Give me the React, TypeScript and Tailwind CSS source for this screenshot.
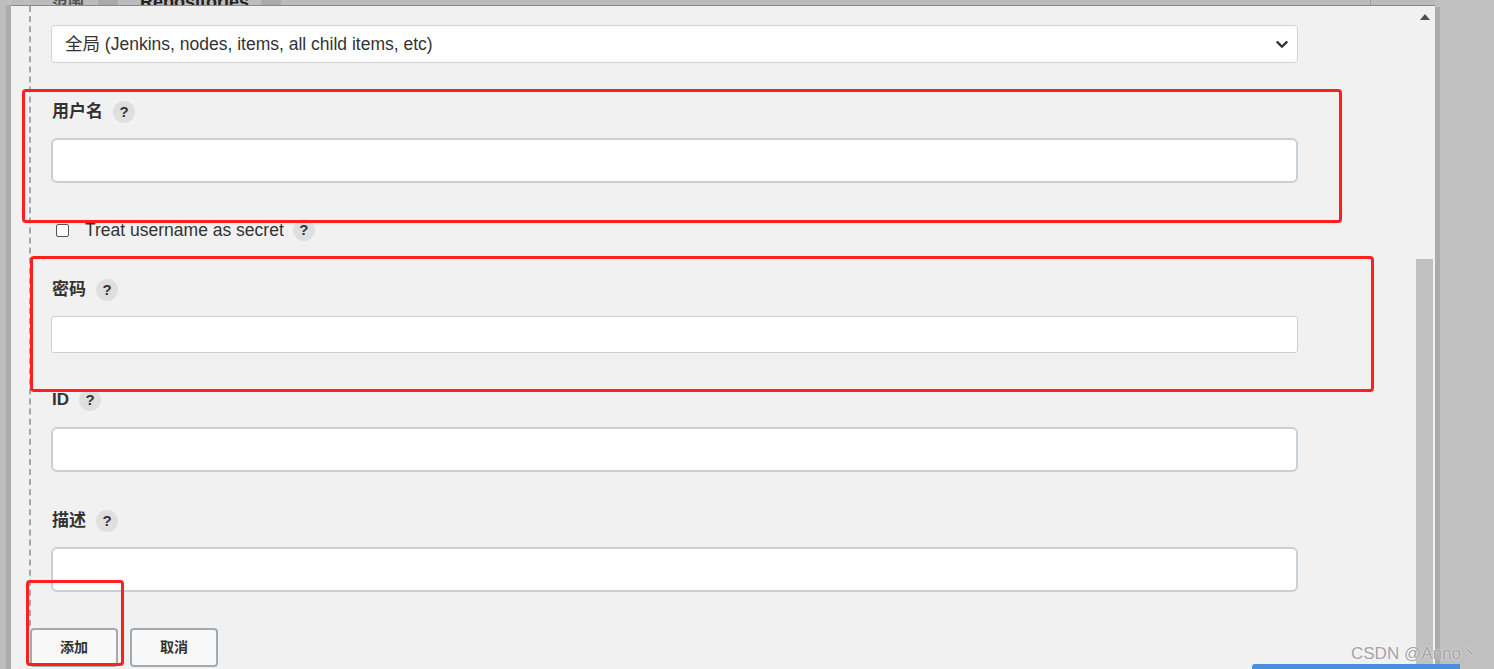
import React from "react";

const CN = "font-['Liberation_Sans','Noto_Sans_CJK_SC',sans-serif]";

function Help({ className = "" }: { className?: string }) {
  return (
    <span
      className={`inline-flex h-[22px] w-[22px] items-center justify-center rounded-full bg-[#dfdfdf] text-[15px] font-bold text-[#333] ${className}`}
    >
      ?
    </span>
  );
}

function Label({ text, className = "" }: { text: string; className?: string }) {
  return (
    <div className={`flex h-[24px] items-center gap-[10px] pl-[1px] ${className}`}>
      <span className="text-[17px] font-bold text-[#333]">{text}</span>
      <Help />
    </div>
  );
}

function Field({ thin = false, className = "" }: { thin?: boolean; className?: string }) {
  return thin ? (
    <div className={`h-[37px] w-[1247px] rounded-[3px] border border-[#c9d1d6] bg-white ${className}`} />
  ) : (
    <div className={`h-[45px] w-[1247px] rounded-[6px] border-2 border-[#c8d0d5] bg-white ${className}`} />
  );
}

export default function App() {
  return (
    <div className={`relative flex h-[669px] w-[1494px] overflow-hidden bg-[#c0c0c0] ${CN}`}>
      {/* left edge */}
      <div className="h-full w-[6px] bg-[#bdbdbd]" />
      <div className="mt-[5px] h-full w-[5px] bg-[#acacac]" />

      {/* main window */}
      <div className="flex h-full w-[1424px] flex-col">
        {/* row above, scrolled mostly out of view */}
        <div className="relative flex h-[6px] items-end overflow-hidden border-b border-[#8a8a8a] bg-[#bcbcbc]">
          <div className="flex items-center pl-[41px] -mb-[11px]">
            <span className="text-[16px] font-bold text-[#555]">范围</span>
            <span className="ml-[14px] h-[20px] w-[20px] rounded-full bg-[#aaa]" />
            <span className="ml-[22px] text-[18px] font-bold text-[#222]">Repositories</span>
            <span className="ml-[12px] h-[20px] w-[20px] rounded-full bg-[#aaa]" />
          </div>
          <div className="ml-auto mr-[64px] h-full w-px bg-[#9a9a9a]" />
        </div>

        {/* panel */}
        <div className="flex flex-1 bg-[#f1f1f1]">
          <div className="flex flex-1 flex-col">
            <div className="ml-[18px] flex flex-col border-l-2 border-dashed border-[#a6a6a6] pb-[34px] pl-[20px] pt-[19px]">
              {/* scope select */}
              <div className="flex h-[38px] w-[1247px] items-center justify-between rounded-[4px] border border-[#cfd3d6] bg-white pl-[13px] pr-[4px]">
                <span className="text-[17.5px] text-[#333]">全局 (Jenkins, nodes, items, all child items, etc)</span>
                <svg width="22" height="22" viewBox="0 0 24 24" fill="none" stroke="#333" strokeWidth="2.6" strokeLinecap="round" strokeLinejoin="round">
                  <path d="M7 10l5 5 5-5" />
                </svg>
              </div>

              <Label text="用户名" className="mt-[37px]" />
              <Field className="mt-[14px]" />

              <label className="mt-[37px] flex h-[20px] items-center gap-[16px] pl-[5px]">
                <span className="h-[13px] w-[13px] rounded-[2px] border border-[#555] bg-white" />
                <span className="text-[17.5px] text-[#333]">Treat username as secret</span>
                <Help className="ml-[-7px]" />
              </label>

              <Label text="密码" className="mt-[38px]" />
              <Field thin className="mt-[14px]" />

              <Label text="ID" className="mt-[35px]" />
              <Field className="mt-[15px]" />

              <Label text="描述" className="mt-[37px]" />
              <Field className="mt-[14px]" />
            </div>

            <div className="flex gap-[12px] pl-[19px] pt-[2px]">
              <button className="h-[39px] w-[88px] rounded-[4px] border-2 border-[#a2abb2] bg-[#f8f8f8] text-[14px] font-semibold text-[#333]">
                添加
              </button>
              <button className="h-[39px] w-[88px] rounded-[4px] border-2 border-[#a2abb2] bg-[#f8f8f8] text-[14px] font-semibold text-[#333]">
                取消
              </button>
            </div>
          </div>

          {/* scrollbar */}
          <div className="mr-[2px] flex w-[17px] flex-col items-center">
            <svg width="10" height="6" viewBox="0 0 10 6" className="mt-[8px]">
              <path d="M0 6L5 0L10 6Z" fill="#505050" />
            </svg>
            <div className="mt-[239px] w-full flex-1 bg-[#c1c1c1]" />
          </div>
        </div>
      </div>

      <div className="mt-[7px] h-full w-[5px] bg-[#ababab]" />
      <div className="flex-1" />

      {/* annotation boxes */}
      <div className="absolute left-[22px] top-[89px] h-[134px] w-[1320px] rounded-[4px] border-[3px] border-[#ff1f1f]" />
      <div className="absolute left-[30px] top-[256px] h-[136px] w-[1344px] rounded-[4px] border-[3px] border-[#ff1f1f]" />
      <div className="absolute left-[26px] top-[580px] h-[86px] w-[98px] rounded-[4px] border-[3px] border-[#ff1f1f]" />

      {/* taskbar sliver + watermark */}
      <div className="absolute left-[1252px] top-[664px] h-[5px] w-[208px] rounded-tl-[3px] bg-[#4a8ee0]" />
      <div className="absolute left-[1351px] top-[641px] text-[17px] text-[#a3a3a3] [text-shadow:0_0_2px_#ffffff]">
        CSDN @Anno丶
      </div>
    </div>
  );
}
